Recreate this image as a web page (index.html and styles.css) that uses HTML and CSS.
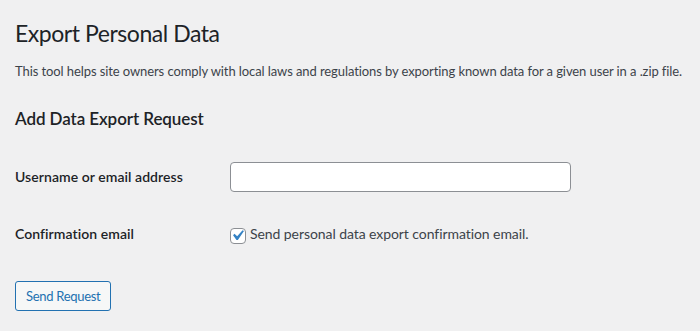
FILE: index.html
```html
<!DOCTYPE html>
<html lang="en">
<head>
<meta charset="utf-8">
<title>Export Personal Data</title>
<link rel="stylesheet" href="styles.css">
</head>
<body>
<div class="wrap">
  <h1 class="page-title">Export Personal Data</h1>
  <p class="intro">This tool helps site owners comply with local laws and regulations by exporting known data for a given user in a .zip file.</p>
  <h2 class="section-title">Add Data Export Request</h2>
  <form class="form-table">
    <label class="field-label" for="username">Username or email address</label>
    <div class="field">
      <input class="text-input" id="username" type="text">
    </div>
    <div class="field-label">Confirmation email</div>
    <div class="field">
      <label class="check-row">
        <span class="checkbox" role="checkbox" aria-checked="true">
          <svg viewBox="0 0 20 20" width="21" height="21" aria-hidden="true"><path d="M14.83 4.89l1.34.94-5.81 8.38H9.02L5.78 9.67l1.34-1.25 2.57 2.4z" fill="#3582c4"/></svg>
        </span>
        <span class="check-text">Send personal data export confirmation email.</span>
      </label>
    </div>
  </form>
  <div class="actions">
    <button class="button" type="button">Send Request</button>
  </div>
</div>
</body>
</html>
```

FILE: styles.css
```css
html, body {
  margin: 0;
  padding: 0;
  background: #f0f0f1;
}

body {
  font-family: Lato, "Noto Sans", sans-serif;
  color: #3c434a;
  font-size: 13px;
}

.wrap {
  padding: 18px 0 0 15px;
}

.page-title {
  margin: 0;
  font-size: 23px;
  font-weight: 400;
  line-height: 30px;
  letter-spacing: -0.45px;
  color: #1d2327;
}

.intro {
  margin: 13px 0 0;
  font-size: 13px;
  line-height: 20px;
  letter-spacing: -0.09px;
}

.section-title {
  margin: 27px 0 0;
  font-size: 17px;
  font-weight: 600;
  line-height: 22px;
  letter-spacing: -0.08px;
  color: #1d2327;
}

.form-table {
  margin-top: 32px;
  display: grid;
  grid-template-columns: 215px 341px;
  row-gap: 32px;
  align-items: center;
}

.field-label {
  font-size: 14px;
  font-weight: 600;
  line-height: 20px;
  letter-spacing: 0.06px;
  color: #1d2327;
}

.field {
  display: flex;
  align-items: center;
}

.text-input {
  box-sizing: border-box;
  width: 341px;
  height: 30px;
  margin: 0;
  padding: 0 8px;
  border: 1px solid #8c8f94;
  border-radius: 4px;
  background: #fff;
  font: inherit;
  font-size: 14px;
  color: #2c3338;
}

.check-row {
  display: flex;
  align-items: flex-start;
  gap: 4px;
  font-size: 14px;
  line-height: 20px;
  letter-spacing: -0.07px;
  color: #3c434a;
}

.checkbox {
  box-sizing: border-box;
  width: 16px;
  height: 16px;
  margin-top: 4px;
  border: 1px solid #8c8f94;
  border-radius: 4px;
  background: #fff;
  position: relative;
  flex: none;
}

.checkbox svg {
  position: absolute;
  left: -4px;
  top: -4px;
}

.actions {
  margin-top: 37px;
}

.button {
  box-sizing: border-box;
  height: 30px;
  margin: 0;
  padding: 0 10px;
  border: 1px solid #2271b1;
  border-radius: 3px;
  background: #f6f7f7;
  color: #2271b1;
  font: inherit;
  font-size: 13px;
  line-height: 28px;
  letter-spacing: -0.3px;
  cursor: pointer;
}
```
